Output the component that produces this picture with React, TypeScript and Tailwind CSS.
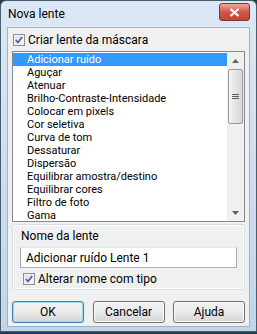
import React from 'react';

const items = [
  'Adicionar ruído',
  'Aguçar',
  'Atenuar',
  'Brilho-Contraste-Intensidade',
  'Colocar em pixels',
  'Cor seletiva',
  'Curva de tom',
  'Dessaturar',
  'Dispersão',
  'Equilibrar amostra/destino',
  'Equilibrar cores',
  'Filtro de foto',
  'Gama',
];

function Check({ checked }: { checked: boolean }) {
  return (
    <span className="w-[12px] h-[12px] border border-[#8e8f8f] bg-gradient-to-br from-[#d8dce4] to-[#fbfbfb] shadow-[inset_0_0_0_1px_#f4f4f4] flex items-center justify-center shrink-0">
      {checked && (
        <svg width="8" height="8" viewBox="0 0 8 8">
          <path d="M0.8 4 L3 6.5 L7.2 1" fill="none" stroke="#4a5f97" strokeWidth="1.7" />
        </svg>
      )}
    </span>
  );
}

function Btn({ label, focus }: { label: string; focus?: boolean }) {
  return (
    <button
      className={`w-[72px] h-[22px] rounded-[3px] border text-[12px] text-black bg-gradient-to-b from-[#f2f2f2] via-[#ebebeb] to-[#d4d4d4] ${
        focus ? 'border-[#3c7fb1] shadow-[inset_0_0_0_1px_#9cd9f5]' : 'border-[#707070] shadow-[inset_0_0_0_1px_#fbfbfb]'
      }`}
    >
      {label}
    </button>
  );
}

export default function App() {
  return (
    <div className="w-[257px] h-[334px] bg-[#243e4e] overflow-hidden" style={{ fontFamily: 'Roboto, sans-serif' }}>
      <div className="h-[332px] rounded-t-[6px] border border-[#4a5e72] bg-gradient-to-b from-[#dce8f5] via-[#cfdeee] to-[#c2d5e9] px-[6px] flex flex-col">
        <div className="h-[26px] flex items-center justify-between">
          <span className="text-[12px] text-black pl-[1px]">Nova lente</span>
          <div className="w-[31px] h-[18px] mt-[-4px] rounded-[3px] border border-[#7a3a30] bg-gradient-to-b from-[#e9a99a] via-[#d0574a] to-[#c4432f] flex items-center justify-center">
            <svg width="11" height="9" viewBox="0 0 11 9">
              <path d="M1.5 1 L9.5 8 M9.5 1 L1.5 8" stroke="#fff" strokeWidth="2.2" />
            </svg>
          </div>
        </div>
        <div className="flex-1 mb-[4px] border border-[#9fb2c6] bg-[#f0f0f0] px-[4px] flex flex-col text-[12px] text-black">
          <label className="flex items-center gap-[3px] h-[23px] pl-[1px]">
            <Check checked />
            <span>Criar lente da máscara</span>
          </label>
          <div className="h-[171px] border border-[#828790] bg-white flex">
            <div className="flex-1 pt-[1px] text-[11px]">
              {items.map((t, i) => (
                <div
                  key={t}
                  className={`h-[13px] leading-[13px] pl-[14px] whitespace-nowrap ${i === 0 ? 'bg-[#3399ff] text-white' : ''}`}
                >
                  {t}
                </div>
              ))}
            </div>
            <div className="w-[17px] bg-[#f0f0f0] flex flex-col">
              <div className="h-[17px] flex items-center justify-center">
                <svg width="7" height="4" viewBox="0 0 7 4">
                  <path d="M0 4 L3.5 0 L7 4 Z" fill="#606060" />
                </svg>
              </div>
              <div className="h-[55px] mx-[1px] rounded-[2px] border border-[#9a9a9a] bg-gradient-to-r from-[#f4f4f4] to-[#d6d6d6] flex items-center justify-center">
                <svg width="7" height="6" viewBox="0 0 7 6">
                  <path d="M0 0.5 H7 M0 2.5 H7 M0 4.5 H7" stroke="#606060" strokeWidth="1" />
                </svg>
              </div>
              <div className="flex-1" />
              <div className="h-[17px] flex items-center justify-center">
                <svg width="7" height="4" viewBox="0 0 7 4">
                  <path d="M0 0 L3.5 4 L7 0 Z" fill="#606060" />
                </svg>
              </div>
            </div>
          </div>
          <div className="mt-[2px] h-[66px] border border-[#d5dfe5] rounded-[3px] shadow-[inset_0_0_0_1px_#ffffff] px-[7px] pt-[2px]">
            <div className="h-[18px] leading-[18px] pl-[1px]">Nome da lente</div>
            <div className="mt-[2px] h-[21px] border border-[#abadb3] border-t-[#e3e9ef] bg-white flex items-center px-[5px]">
              Adicionar ruído Lente 1
            </div>
            <label className="flex items-center gap-[3px] h-[22px] pl-[3px]">
              <Check checked />
              <span>Alterar nome com tipo</span>
            </label>
          </div>
          <div className="mt-[11px] flex justify-between">
            <Btn label="OK" focus />
            <Btn label="Cancelar" />
            <Btn label="Ajuda" />
          </div>
        </div>
      </div>
    </div>
  );
}
